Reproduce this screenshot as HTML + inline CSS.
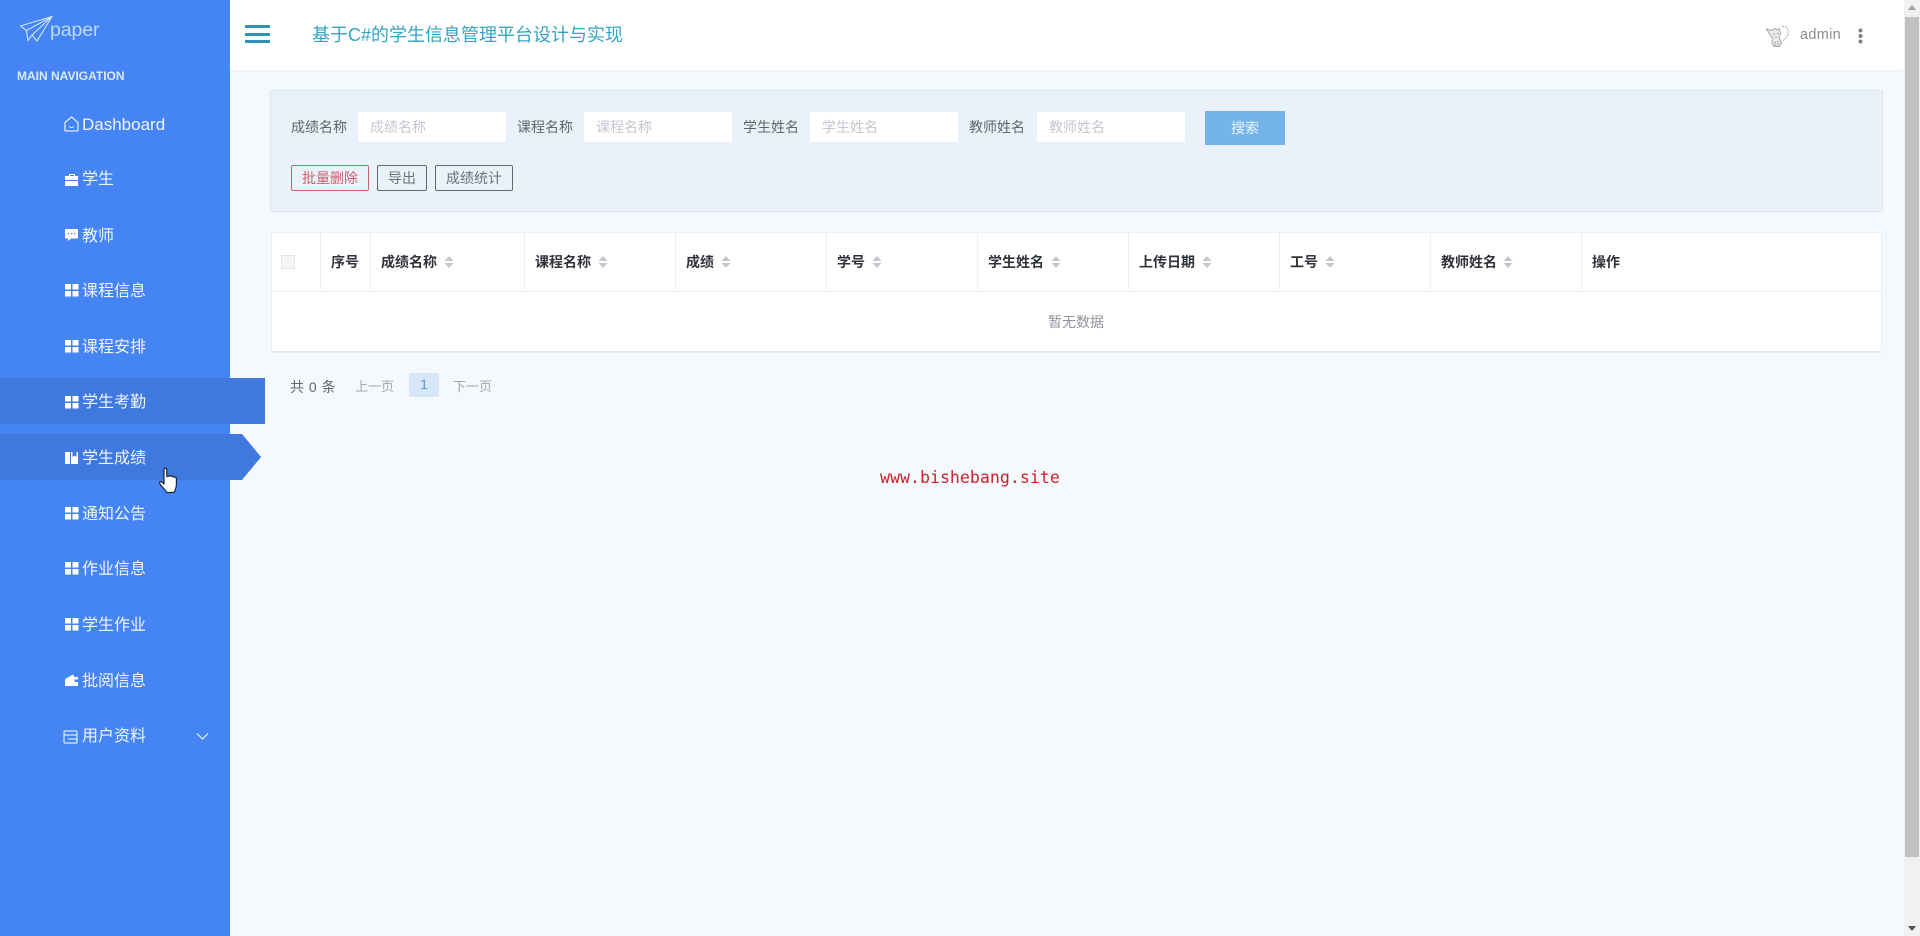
<!DOCTYPE html>
<html lang="zh">
<head>
<meta charset="utf-8">
<title>paper</title>
<style>
*{box-sizing:border-box;margin:0;padding:0}
html,body{width:1920px;height:936px;overflow:hidden;background:#f5f8fc;font-family:"Liberation Sans","Noto Sans CJK SC",sans-serif;color:#606266}
.a{position:absolute;white-space:nowrap}
#side{position:absolute;left:0;top:0;width:230px;height:936px;background:#4584f3}
#head{position:absolute;left:230px;top:0;width:1674px;height:70px;background:#fff;box-shadow:0 1px 2px rgba(215,222,235,.25)}
.m{position:absolute;left:82px;font-size:16px;line-height:24px;color:#f0f6ff;white-space:nowrap;height:24px}
.ic{position:absolute;left:65px;width:14px;height:14px}
.strip{position:absolute;left:0;height:46px;background:#3f79de}
.lb{position:absolute;top:117px;font-size:14px;line-height:20px;color:#5f6670;white-space:nowrap}
.in{position:absolute;top:112px;height:30px;width:148px;background:#fff;font-size:14px;line-height:30px;color:#c3c7cd;padding-left:12px;white-space:nowrap}
.btn{position:absolute;top:165px;height:26px;background:transparent;border:1px solid #606a75;border-radius:2px;font-size:14px;line-height:24px;text-align:center;color:#6a727c;white-space:nowrap}
.th{position:absolute;top:252px;font-size:14px;line-height:20px;font-weight:bold;color:#303338;white-space:nowrap}
.sep{position:absolute;top:233px;width:1px;height:56px;background:#ebeef3}
.sort{position:absolute;top:256px;width:10px;height:12px}
</style>
</head>
<body>
<div id="side"></div>

<!-- logo -->
<svg class="a" style="left:19px;top:15px" width="34" height="28" viewBox="0 0 34 28" fill="none" stroke="#cfe6ff" stroke-width="1.100" stroke-linejoin="round">
<path d="M1.500 11L33 1.500L18 26L13 20L9 25.500L7.500 15.500Z"/>
<path d="M7.500 15.500L33 1.500L13 20"/>
</svg>
<div class="a" style="left:50px;top:17px;font-size:19.500px;line-height:26px;color:#bcd9ff;letter-spacing:-.1px">paper</div>
<div class="a" style="left:17px;top:69px;font-size:12px;line-height:15px;font-weight:bold;color:#dbe9ff">MAIN NAVIGATION</div>

<div class="strip" style="top:378px;width:265px"></div>
<svg class="a" style="left:0;top:434px" width="262" height="46" viewBox="0 0 262 46"><path d="M0 0H242L261 23L242 46H0Z" fill="#3f79de"/></svg>

<!-- menu icons -->
<svg class="ic" style="top:116px;left:64px;width:15px;height:16px" viewBox="0 0 15 16" fill="none" stroke="#dcebff" stroke-width="1.300"><path d="M1 6.500L7.500 1L14 6.500V14.500A.8.8 0 0 1 13.200 15H1.800A.8.8 0 0 1 1 14.500Z"/><path d="M5 10.500Q7.500 12.500 10 10.500" stroke-width="1"/></svg>
<svg class="ic" style="top:173px" viewBox="0 0 14 14" fill="#fff"><path d="M4 3V1H10V3H9V2H5V3Z"/><path d="M0 3H13V7H0Z"/><path d="M0 8H13V13H0Z"/></svg>
<svg class="ic" style="top:228px" viewBox="0 0 14 14" fill="#fff"><path d="M0 1H13V10.500H6L3 13V10.500H0Z"/><g fill="#4584f3"><rect x="3" y="5" width="1.300" height="1.300"/><rect x="6" y="5" width="1.300" height="1.300"/><rect x="9" y="5" width="1.300" height="1.300"/></g></svg>
<svg class="ic" style="top:284px" viewBox="0 0 14 14" fill="#fff"><rect x="0" y="0" width="6" height="5.500"/><rect x="7.500" y="0" width="6" height="5.500"/><rect x="0" y="7" width="6" height="5.500"/><rect x="7.500" y="7" width="6" height="5.500"/></svg>
<svg class="ic" style="top:340px" viewBox="0 0 14 14" fill="#fff"><rect x="0" y="0" width="6" height="5.500"/><rect x="7.500" y="0" width="6" height="5.500"/><rect x="0" y="7" width="6" height="5.500"/><rect x="7.500" y="7" width="6" height="5.500"/></svg>
<svg class="ic" style="top:396px" viewBox="0 0 14 14" fill="#fff"><rect x="0" y="0" width="6" height="5.500"/><rect x="7.500" y="0" width="6" height="5.500"/><rect x="0" y="7" width="6" height="5.500"/><rect x="7.500" y="7" width="6" height="5.500"/></svg>
<svg class="ic" style="top:451px" viewBox="0 0 14 14" fill="#fff"><path d="M0 1H5V13H0Z"/><path d="M6 1H7.500V6L9.500 4.500L11.500 6V1H13V13H6Z"/></svg>
<svg class="ic" style="top:507px" viewBox="0 0 14 14" fill="#fff"><rect x="0" y="0" width="6" height="5.500"/><rect x="7.500" y="0" width="6" height="5.500"/><rect x="0" y="7" width="6" height="5.500"/><rect x="7.500" y="7" width="6" height="5.500"/></svg>
<svg class="ic" style="top:562px" viewBox="0 0 14 14" fill="#fff"><rect x="0" y="0" width="6" height="5.500"/><rect x="7.500" y="0" width="6" height="5.500"/><rect x="0" y="7" width="6" height="5.500"/><rect x="7.500" y="7" width="6" height="5.500"/></svg>
<svg class="ic" style="top:618px" viewBox="0 0 14 14" fill="#fff"><rect x="0" y="0" width="6" height="5.500"/><rect x="7.500" y="0" width="6" height="5.500"/><rect x="0" y="7" width="6" height="5.500"/><rect x="7.500" y="7" width="6" height="5.500"/></svg>
<svg class="ic" style="top:673px" viewBox="0 0 14 14" fill="#fff"><path d="M0 6L8 1.500L9.500 4H13V6.500H9.500V9H13V13H0Z"/></svg>
<svg class="ic" style="top:730px;left:63px;width:15px;height:14px" viewBox="0 0 15 14" fill="none" stroke="#dcebff" stroke-width="1.200"><rect x="1" y="1" width="13" height="12" rx="1"/><path d="M1 5H14M5 9H14"/></svg>

<!-- menu text -->
<div class="m" style="top:113px;font-size:17px">Dashboard</div>
<div class="m" style="top:168px">学生</div>
<div class="m" style="top:225px">教师</div>
<div class="m" style="top:280px">课程信息</div>
<div class="m" style="top:336px">课程安排</div>
<div class="m" style="top:391px">学生考勤</div>
<div class="m" style="top:447px">学生成绩</div>
<div class="m" style="top:503px">通知公告</div>
<div class="m" style="top:558px">作业信息</div>
<div class="m" style="top:614px">学生作业</div>
<div class="m" style="top:670px">批阅信息</div>
<div class="m" style="top:725px">用户资料</div>
<svg class="a" style="left:196px;top:732px" width="13" height="9" viewBox="0 0 13 9" fill="none" stroke="#cfe6ff" stroke-width="1.400"><path d="M1 1.500L6.500 7L12 1.500"/></svg>

<!-- cursor -->
<svg class="a" style="left:158px;top:467px" width="22" height="27" viewBox="0 0 22 27">
<path d="M6 2.500C6 .8 8.800 .8 8.800 2.500V9.500L10.800 9.300C11 8.200 13 8.200 13.300 9.600C13.800 8.800 15.600 8.900 15.900 10.300C16.500 9.700 18.300 10 18.400 11.600V17.500C18.400 21 17 23 16 25.500H8.500C7.500 22.500 4 20.500 1.800 16.500C1 15 2.800 13.800 4 15L6 17Z" fill="#fff" stroke="#1b2433" stroke-width="1.200" stroke-linejoin="round"/>
<path d="M10.500 3V8M13.300 14V19" stroke="none" fill="none"/>
</svg>

<!-- header -->
<div id="head"></div>
<div class="a" style="left:245px;top:25px;width:25px;height:3px;background:#2d93b5"></div>
<div class="a" style="left:245px;top:33px;width:25px;height:2.500px;background:#2d93b5"></div>
<div class="a" style="left:245px;top:40px;width:25px;height:3px;background:#2d93b5"></div>
<div class="a" style="left:312px;top:22px;font-size:18px;line-height:26px;color:#35a3c4">基于C#的学生信息管理平台设计与实现</div>
<svg class="a" style="left:1765px;top:24px" width="26" height="24" viewBox="0 0 26 24" fill="none" stroke="#a4a7a7" stroke-width="1">
<path d="M1.500 5L6 6.500L10 4.500L12 6L14 4.500L15.500 9.500L14 13L16.500 19.500L14.500 22.500H9L7 19L7.500 14L4.500 10Z" fill="#ebebeb"/>
<path d="M8 10H10M12 9.500H14M10 13H12M10 22V17M13 22V17"/>
<path d="M17 3C20 1 24 4 23 9C22.500 13 20 16 17 17" stroke-dasharray="2 1"/>
</svg>
<div class="a" style="left:1800px;top:25px;font-size:14.500px;line-height:20px;color:#8a8d92;letter-spacing:.3px">admin</div>
<svg class="a" style="left:1857px;top:27px" width="7" height="18" viewBox="0 0 7 18" fill="#7d8084"><circle cx="3.500" cy="3.500" r="2"/><circle cx="3.500" cy="9" r="2"/><circle cx="3.500" cy="14.500" r="2"/></svg>

<!-- filter panel -->
<div class="a" style="left:270px;top:90px;width:1613px;height:122px;background:#e9f2fb;border:1px solid #dde5ee"></div>
<div class="lb" style="left:291px">成绩名称</div>
<div class="in" style="left:358px">成绩名称</div>
<div class="lb" style="left:517px">课程名称</div>
<div class="in" style="left:584px">课程名称</div>
<div class="lb" style="left:743px">学生姓名</div>
<div class="in" style="left:810px">学生姓名</div>
<div class="lb" style="left:969px">教师姓名</div>
<div class="in" style="left:1037px">教师姓名</div>
<div class="a" style="left:1205px;top:111px;width:80px;height:34px;background:#74b4e9;color:#eaf6ff;font-size:14px;line-height:34px;text-align:center">搜索</div>
<div class="btn" style="left:291px;width:78px;border-color:#d0606c;color:#d0606c">批量删除</div>
<div class="btn" style="left:377px;width:50px">导出</div>
<div class="btn" style="left:435px;width:78px">成绩统计</div>

<!-- table -->
<div class="a" style="left:271px;top:232px;width:1611px;height:121px;background:#fff;border:1px solid #ebeef3;border-bottom:2px solid #e6e9ee"></div>
<div class="a" style="left:271px;top:291px;width:1611px;height:1px;background:#e9ecf1"></div>
<div class="a" style="left:281px;top:255px;width:14px;height:14px;background:#f3f4f6;border:1px solid #dfe2e7;border-radius:1px"></div>
<div class="sep" style="left:320px"></div>
<div class="sep" style="left:370px"></div>
<div class="sep" style="left:524px"></div>
<div class="sep" style="left:675px"></div>
<div class="sep" style="left:826px"></div>
<div class="sep" style="left:977px"></div>
<div class="sep" style="left:1128px"></div>
<div class="sep" style="left:1279px"></div>
<div class="sep" style="left:1430px"></div>
<div class="sep" style="left:1581px"></div>
<div class="th" style="left:331px">序号</div>
<div class="th" style="left:381px">成绩名称</div>
<div class="th" style="left:535px">课程名称</div>
<div class="th" style="left:686px">成绩</div>
<div class="th" style="left:837px">学号</div>
<div class="th" style="left:988px">学生姓名</div>
<div class="th" style="left:1139px">上传日期</div>
<div class="th" style="left:1290px">工号</div>
<div class="th" style="left:1441px">教师姓名</div>
<div class="th" style="left:1592px">操作</div>
<svg class="sort" style="left:444px" viewBox="0 0 10 12" fill="#c4c7cc"><path d="M5 0L9.500 5H.5ZM.5 7H9.500L5 12Z"/></svg>
<svg class="sort" style="left:598px" viewBox="0 0 10 12" fill="#c4c7cc"><path d="M5 0L9.500 5H.5ZM.5 7H9.500L5 12Z"/></svg>
<svg class="sort" style="left:721px" viewBox="0 0 10 12" fill="#c4c7cc"><path d="M5 0L9.500 5H.5ZM.5 7H9.500L5 12Z"/></svg>
<svg class="sort" style="left:872px" viewBox="0 0 10 12" fill="#c4c7cc"><path d="M5 0L9.500 5H.5ZM.5 7H9.500L5 12Z"/></svg>
<svg class="sort" style="left:1051px" viewBox="0 0 10 12" fill="#c4c7cc"><path d="M5 0L9.500 5H.5ZM.5 7H9.500L5 12Z"/></svg>
<svg class="sort" style="left:1202px" viewBox="0 0 10 12" fill="#c4c7cc"><path d="M5 0L9.500 5H.5ZM.5 7H9.500L5 12Z"/></svg>
<svg class="sort" style="left:1325px" viewBox="0 0 10 12" fill="#c4c7cc"><path d="M5 0L9.500 5H.5ZM.5 7H9.500L5 12Z"/></svg>
<svg class="sort" style="left:1503px" viewBox="0 0 10 12" fill="#c4c7cc"><path d="M5 0L9.500 5H.5ZM.5 7H9.500L5 12Z"/></svg>
<div class="a" style="left:1048px;top:312px;font-size:14px;line-height:20px;color:#8f9399">暂无数据</div>

<!-- pagination -->
<div class="a" style="left:290px;top:377px;font-size:14px;line-height:20px;color:#5f6670;word-spacing:1px">共 0 条</div>
<div class="a" style="left:355px;top:377px;font-size:13px;line-height:20px;color:#a4a8ae">上一页</div>
<div class="a" style="left:409px;top:373px;width:30px;height:24px;background:#d6e8f7;border-radius:2px;font-size:14px;line-height:22px;text-align:center;color:#5d9cc9">1</div>
<div class="a" style="left:453px;top:377px;font-size:13px;line-height:20px;color:#a4a8ae">下一页</div>

<!-- watermark -->
<div class="a" style="left:880px;top:468px;font-family:'DejaVu Sans Mono',monospace;font-size:16.600px;line-height:20px;color:#c8242b">www.bishebang.site</div>

<!-- scrollbar -->
<div class="a" style="left:1904px;top:0;width:16px;height:936px;background:#f1f1f1"></div>
<div class="a" style="left:1905px;top:17px;width:14px;height:840px;background:#c1c1c1"></div>
<svg class="a" style="left:1904px;top:0" width="16" height="16" viewBox="0 0 16 16" fill="#a3a3a3"><path d="M8 5L12 10H4Z"/></svg>
<svg class="a" style="left:1904px;top:920px" width="16" height="16" viewBox="0 0 16 16" fill="#505050"><path d="M4 6H12L8 11Z"/></svg>
</body>
</html>
